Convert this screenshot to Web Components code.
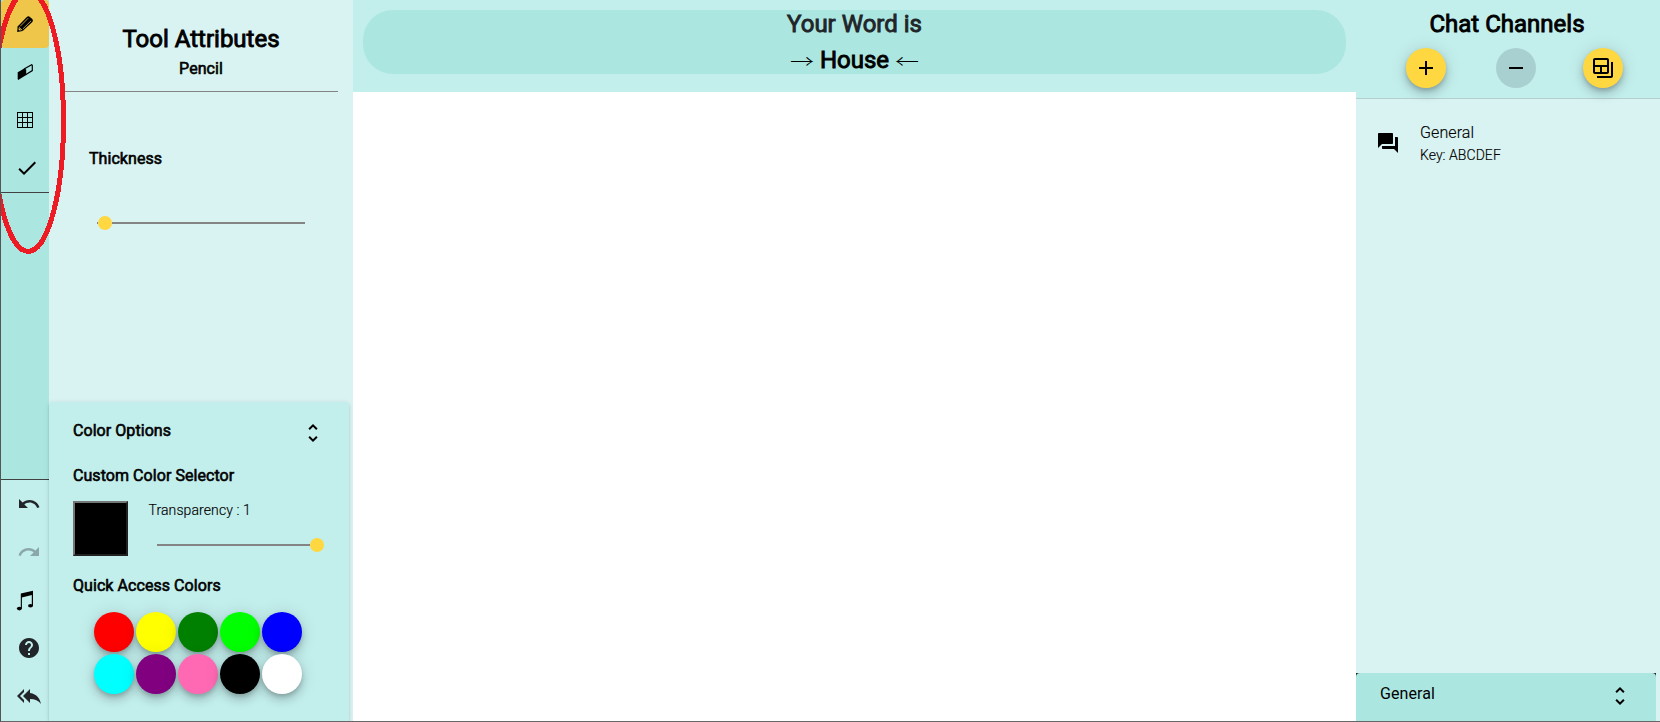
<!DOCTYPE html>
<html lang="en">
<head>
<meta charset="utf-8">
<title>Drawing game</title>
<style>
  html, body { margin: 0; height: 100%; overflow: hidden; }
  body { font-family: Roboto, "Liberation Sans", sans-serif; color: #000; background: #fff; }
</style>
</head>
<body>
<game-app></game-app>
<script>
const ICONS = {
  pencil: '<g transform="translate(4 4)"><path d="M.2 15.9.6 10.6 9.8 1Q11.4-.4 12.9.9L15.3 3.1Q16.600 4.500 15.300 5.900L5.700 15.100Z"/><path d="M1.900 11.100 5.200 14.200M3.200 10.300l8-8.100M5.900 12.900l8.200-8.100" fill="none" stroke="#efc64a" stroke-width=".8"/><path d="M1.700 11.800 1.500 13.600 2.600 14.600 4.300 14.200Z" fill="#efc64a"/></g>',
  eraser: '<g transform="translate(4 4)"><path d="M.7 8.3 7.2 4.6 9.2 5.6V10.9L1.2 15.9.7 15Z"/><path d="M7 5.1 14.7.8 15.3 1.2V6.6L8.6 10.7" fill="none" stroke="#000" stroke-width="1.2"/></g>',
  grid: '<path shape-rendering="crispEdges" d="M4.5 4.5h15v15h-15zM9.5 4v16M14.5 4v16M4 9.5h16M4 14.5h16" fill="none" stroke="#000"/>',
  check: '<path d="M9 16.17 4.83 12l-1.42 1.41L9 19 21 7l-1.41-1.41z"/>',
  undo: '<path d="M12.5 8c-2.65 0-5.05.99-6.9 2.6L2 7v9h9l-3.62-3.62c1.39-1.16 3.16-1.88 5.12-1.88 3.54 0 6.55 2.31 7.6 5.5l2.37-.78C21.08 11.03 17.15 8 12.5 8z"/>',
  redo: '<path d="M18.4 10.6C16.55 8.99 14.15 8 11.5 8c-4.65 0-8.58 3.03-9.96 7.22L3.9 16c1.05-3.19 4.05-5.5 7.6-5.5 1.95 0 3.73.72 5.12 1.88L13 16h9V7l-3.6 3.6z"/>',
  music: '<ellipse cx="6.4" cy="20.6" rx="2.5" ry="1.8"/><ellipse cx="17.5" cy="17.7" rx="2.5" ry="1.8"/><path d="M7.8 5.6 20 2.7V17.7H18.800V7L8.9 9.4V20.6H7.8z"/>',
  help: '<path d="M12 2C6.48 2 2 6.48 2 12s4.48 10 10 10 10-4.48 10-10S17.52 2 12 2zm1 17h-2v-2h2v2zm2.07-7.75-.9.92C13.45 12.9 13 13.5 13 15h-2v-.5c0-1.1.45-2.1 1.17-2.83l1.24-1.26c.37-.36.59-.86.59-1.41 0-1.1-.9-2-2-2s-2 .9-2 2H8c0-2.21 1.79-4 4-4s4 1.79 4 4c0 .88-.36 1.68-.93 2.25z"/>',
  leave: '<path d="M7 8V5l-7 7 7 7v-3l-4-4 4-4zm6 1V5l-7 7 7 7v-4.1c5 0 8.5 1.6 11 5.1-1-5-4-10-11-11z"/>',
  unfold: '<path d="M12 5.83 15.17 9l1.41-1.41L12 3 7.41 7.59 8.83 9 12 5.83zm0 12.34L8.83 15l-1.41 1.41L12 21l4.59-4.59L15.17 15 12 18.17z"/>',
  add: '<path d="M19 13h-6v6h-2v-6H5v-2h6V5h2v6h6v2z"/>',
  remove: '<path d="M19 13H5v-2h14v2z"/>',
  windows: '<path d="M20 6v14H6v2h14c1.1 0 2-.9 2-2V6h-2z"/><path d="M16 2H4c-1.1 0-2 .9-2 2v12c0 1.1.9 2 2 2h12c1.1 0 2-.9 2-2V4c0-1.100-.9-2-2-2zM9 16H4v-5h5v5zm7 0h-5v-5h5v5zm0-7H4V4h12v5z"/>',
  forum: '<path d="M21 6h-2v9H6v2c0 .55.45 1 1 1h11l4 4V7c0-.55-.45-1-1-1zm-4 6V3c0-.55-.45-1-1-1H3c-.55 0-1 .45-1 1v14l4-4h10c.55 0 1-.45 1-1z"/>'
};

function define(name, html) {
  const tpl = document.createElement('template');
  tpl.innerHTML = html;
  customElements.define(name, class extends HTMLElement {
    constructor() {
      super();
      this.attachShadow({ mode: 'open' }).append(tpl.content.cloneNode(true));
    }
  });
}

customElements.define('g-icon', class extends HTMLElement {
  connectedCallback() {
    if (this.shadowRoot) return;
    this.attachShadow({ mode: 'open' }).innerHTML =
      '<style>:host{display:block;width:24px;height:24px;flex:none}svg{display:block;overflow:visible}</style>' +
      '<svg width="24" height="24" viewBox="0 0 24 24" fill="currentColor">' + ICONS[this.getAttribute('name')] + '</svg>';
  }
});

define('tool-button', `
  <style>
    :host { display: flex; align-items: center; height: 48px; padding-left: 12px; box-sizing: border-box; border-radius: 4px; }
    :host([active]) { background: #efc64a; }
    :host([shifted]) { padding-left: 14px; }
    :host([wide]) { padding-left: 16px; color: #212529; }
    :host([disabled]) { color: rgba(33,37,41,.35); }
  </style>
  <slot></slot>`);

define('tool-bar', `
  <style>
    :host { display: flex; flex-direction: column; width: 48px; background: #abe7e0; }
    .tools { height: 192px; border-bottom: 1px solid #424242; }
    .gap { flex: 1; }
    .actions { height: 241px; border-top: 1px solid #424242; background: #c2eeec; }
  </style>
  <div class="tools">
    <tool-button active><g-icon name="pencil"></g-icon></tool-button>
    <tool-button><g-icon name="eraser"></g-icon></tool-button>
    <tool-button><g-icon name="grid"></g-icon></tool-button>
    <tool-button shifted><g-icon name="check"></g-icon></tool-button>
  </div>
  <div class="gap"></div>
  <div class="actions">
    <tool-button wide><g-icon name="undo"></g-icon></tool-button>
    <tool-button wide disabled><g-icon name="redo"></g-icon></tool-button>
    <tool-button><g-icon name="music"></g-icon></tool-button>
    <tool-button wide><g-icon name="help"></g-icon></tool-button>
    <tool-button wide><g-icon name="leave"></g-icon></tool-button>
  </div>`);

define('range-slider', `
  <style>
    :host { display: flex; align-items: center; height: 14px; }
    .before, .after { height: 2px; background: #848484; }
    .before { width: 1.3px; }
    .after { flex: 1; }
    .thumb { width: 14px; height: 14px; border-radius: 50%; background: #ffd740; }
    :host([full]) .before { flex: 1; }
    :host([full]) .after { display: none; }
  </style>
  <div class="before"></div><div class="thumb"></div><div class="after"></div>`);

customElements.define('color-dot', class extends HTMLElement {
  connectedCallback() {
    if (this.shadowRoot) return;
    this.attachShadow({ mode: 'open' }).innerHTML =
      `<style>:host{display:block;width:40px;height:40px;border-radius:50%;background:${this.getAttribute('value')};
       box-shadow:0 3px 5px -1px rgba(0,0,0,.2),0 6px 10px 0 rgba(0,0,0,.14),0 1px 18px 0 rgba(0,0,0,.12)}</style>`;
  }
});

define('color-card', `
  <style>
    :host { display: block; box-sizing: border-box; width: 300px; height: 319px; padding: 0 24px; background: #c2eeec;
      border-radius: 4px 4px 0 0; box-shadow: 0 3px 1px -2px rgba(0,0,0,.2), 0 2px 2px 0 rgba(0,0,0,.14), 0 1px 5px 0 rgba(0,0,0,.12); }
    .head { display: flex; justify-content: space-between; padding: 19px 0 0; height: 45px; box-sizing: border-box; }
    h4 { margin: 0; font: 400 16px/20px Roboto, sans-serif; -webkit-text-stroke: .6px currentColor; letter-spacing: .06px; white-space: nowrap; }
    .custom { padding-top: 19px; }
    .picker { display: flex; padding-top: 15px; height: 70px; box-sizing: border-box; }
    .swatch { box-sizing: border-box; width: 55px; height: 55px; background: #000; border: 2px solid; border-color: #767676 #212121 #212121 #767676; }
    .alpha { padding-left: 20.500px; }
    .alpha span { display: block; font: 300 14px/18px Roboto, sans-serif; letter-spacing: .1px; -webkit-text-stroke: .15px currentColor; }
    range-slider { width: 167px; margin: 19px 0 0 8.500px; }
    .quick { padding-top: 20px; }
    .dots { display: grid; grid-template-columns: repeat(5, 40px); gap: 2px; padding: 16px 0 0 21px; }
  </style>
  <div class="head"><h4>Color Options</h4><g-icon name="unfold"></g-icon></div>
  <h4 class="custom">Custom Color Selector</h4>
  <div class="picker">
    <div class="swatch"></div>
    <div class="alpha"><span>Transparency : 1</span><range-slider full></range-slider></div>
  </div>
  <h4 class="quick">Quick Access Colors</h4>
  <div class="dots">
    <color-dot value="#f00"></color-dot><color-dot value="#ff0"></color-dot><color-dot value="green"></color-dot><color-dot value="#0f0"></color-dot><color-dot value="#00f"></color-dot>
    <color-dot value="#0ff"></color-dot><color-dot value="purple"></color-dot><color-dot value="#ff69b4"></color-dot><color-dot value="#000"></color-dot><color-dot value="#fff"></color-dot>
  </div>`);

define('attributes-panel', `
  <style>
    :host { display: flex; flex-direction: column; width: 304px; background: #d9f3f2; }
    header { margin: 0 15px; height: 92px; box-sizing: border-box; border-bottom: 1px solid #848484; text-align: center; padding-top: 24px; }
    h2 { margin: 0; font: 400 24px/30px Roboto, sans-serif; -webkit-text-stroke: .9px currentColor; }
    h4 { margin: 0; font: 400 16px/20px Roboto, sans-serif; -webkit-text-stroke: .6px currentColor; letter-spacing: .06px; }
    header h4 { padding-top: 5px; }
    .field { padding: 57px 48px 0 40px; flex: 1; }
    range-slider { margin: 47px 0 0 8px; }
  </style>
  <header><h2>Tool Attributes</h2><h4>Pencil</h4></header>
  <div class="field"><h4>Thickness</h4><range-slider></range-slider></div>
  <color-card></color-card>`);

define('draw-area', `
  <style>
    :host { display: flex; flex-direction: column; flex: 1; }
    header { height: 92px; box-sizing: border-box; background: #c2eeec; padding: 10px; }
    .pill { height: 64px; border-radius: 30px; background: #abe7e0; text-align: center; font: 400 24px/36px Roboto, sans-serif; }
    .pill div { position: relative; top: -4px; -webkit-text-stroke: .9px currentColor; }
    .lead { color: #212529; }
    .arrow { display: inline-block; font: 300 24px/24px "Noto Sans CJK JP", sans-serif; -webkit-text-stroke: 0; transform: translateY(2px) scaleY(.75); }
    .canvas { flex: 1; background: #fff; }
  </style>
  <header><div class="pill">
    <div class="lead">Your Word is</div>
    <div><span class="arrow">→</span> House <span class="arrow">←</span></div>
  </div></header>
  <div class="canvas"></div>`);

define('round-button', `
  <style>
    :host { display: flex; align-items: center; justify-content: center; width: 40px; height: 40px; border-radius: 50%; background: #ffd740;
      box-shadow: 0 3px 5px -1px rgba(0,0,0,.2), 0 6px 10px 0 rgba(0,0,0,.14), 0 1px 18px 0 rgba(0,0,0,.12); }
    :host([disabled]) { background: #a9d0d0; box-shadow: none; }
  </style><slot></slot>`);

define('chat-panel', `
  <style>
    :host { display: flex; flex-direction: column; width: 304px; background: #d9f3f2; }
    header { height: 99px; box-sizing: border-box; background: #c2eeec; border-bottom: 1px solid #b5cfd0; padding-top: 9px; }
    h2 { margin: 0; padding-right: 2px; font: 400 24px/30px Roboto, sans-serif; text-align: center; -webkit-text-stroke: .9px currentColor; }
    .buttons { display: flex; padding: 9px 0 0 50px; }
    .b2 { margin: 0 47px 0 50px; }
    .room { display: flex; padding: 23px 20px 0; flex: 1; }
    .room g-icon { margin: 9px 20px 0 0; }
    .name { font: 300 16px/22px Roboto, sans-serif; letter-spacing: .1px; -webkit-text-stroke: .15px currentColor; }
    .key { font: 300 14px/22px Roboto, sans-serif; letter-spacing: .05px; -webkit-text-stroke: .15px currentColor; }
    .bar { background: #212121; width: 300px; }
    .bar div { display: flex; justify-content: space-between; align-items: center; height: 48px; box-sizing: border-box; padding: 0 24px;
      background: #abe7e0; border-radius: 4px 4px 0 0; font: 400 16px/24px Roboto, sans-serif; letter-spacing: .1px; }
    .bar span { padding-bottom: 6px; }
    .bar g-icon { margin-top: -2px; }
  </style>
  <header>
    <h2>Chat Channels</h2>
    <div class="buttons">
      <round-button><g-icon name="add"></g-icon></round-button>
      <round-button class="b2" disabled><g-icon name="remove"></g-icon></round-button>
      <round-button><g-icon name="windows"></g-icon></round-button>
    </div>
  </header>
  <div class="room"><g-icon name="forum"></g-icon><div><div class="name">General</div><div class="key">Key: ABCDEF</div></div></div>
  <div class="bar"><div><span>General</span><g-icon name="unfold"></g-icon></div></div>`);

define('game-app', `
  <style>
    :host { display: flex; position: relative; width: 1660px; height: 722px; box-sizing: border-box; overflow: hidden;
      border-left: 1px solid #555; border-bottom: 1px solid #666; }
    .ring { position: absolute; left: -1px; top: 0; pointer-events: none; }
  </style>
  <tool-bar></tool-bar>
  <attributes-panel></attributes-panel>
  <draw-area></draw-area>
  <chat-panel></chat-panel>
  <svg class="ring" width="80" height="260" shape-rendering="crispEdges"><ellipse cx="28.2" cy="121.4" rx="35.3" ry="130" fill="none" stroke="#ed1c24" stroke-width="5"/></svg>`);
</script>
</body>
</html>
